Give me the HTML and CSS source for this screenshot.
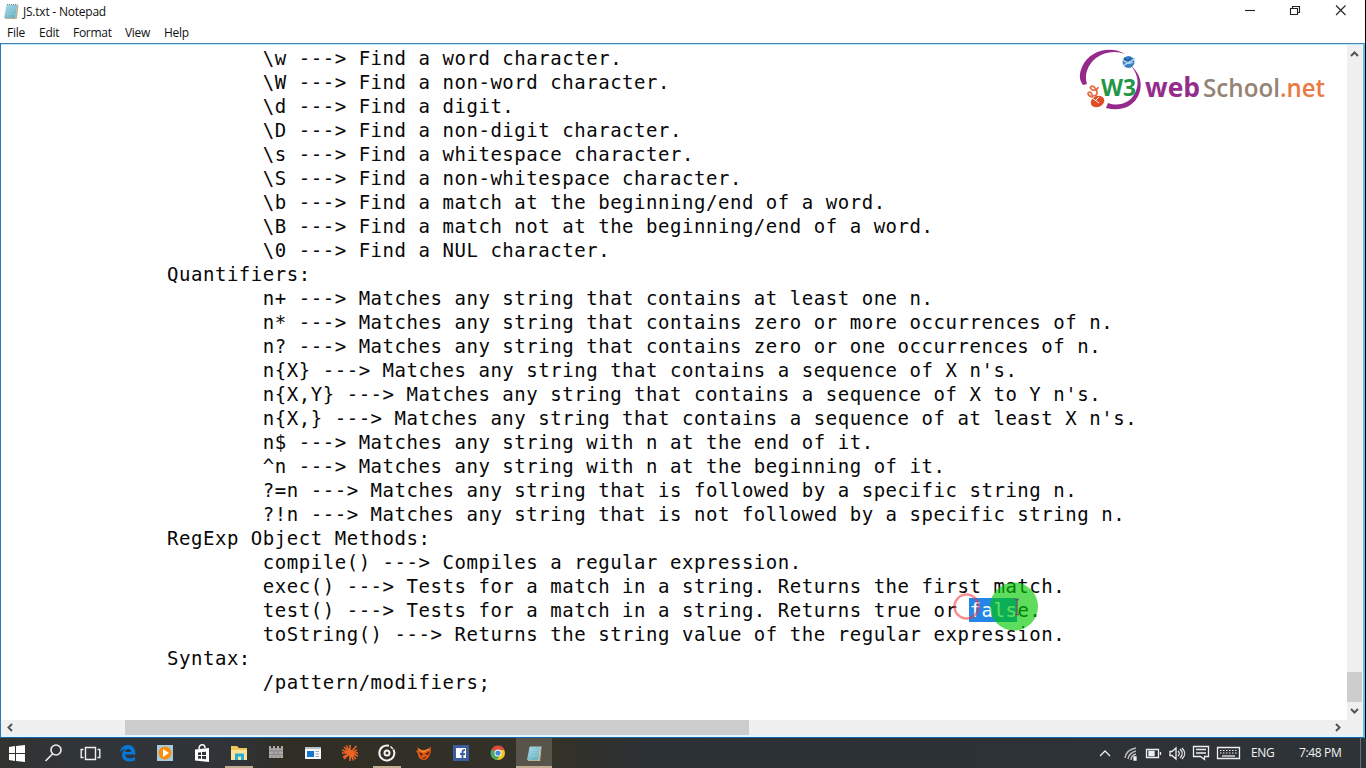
FILE: index.html
```html
<!DOCTYPE html>
<html lang="en">
<head>
<meta charset="utf-8">
<title>JS.txt - Notepad</title>
<link rel="stylesheet" href="styles.css">
</head>
<body>
<svg class="defs" width="0" height="0">
  <defs>
    <linearGradient id="pad" x1="0" y1="0" x2="1" y2="1"><stop offset="0" stop-color="#a9dbe8"/><stop offset="1" stop-color="#5ba9bf"/></linearGradient>
    <symbol id="notepad" viewBox="0 0 16 17">
      <path d="M4 1.5h11.5L14 16H2z" fill="#d8d2ba"/>
      <path d="M3.5 2H14l-1.8 13H1z" fill="url(#pad)"/>
      <path d="M3.2 5h10M2.8 8h10M2.4 11h10" stroke="#a5d5e1" stroke-width=".6"/>
      <path d="M4 1.5h10.5" stroke="#718c91" stroke-width="1" stroke-dasharray="1 1"/>
      <path d="M14.8 3 13.2 15.3H2" fill="none" stroke="#b5ad92" stroke-width="1"/>
    </symbol>
  </defs>
</svg>
<div class="window">
  <header class="titlebar">
    <svg class="app-icon" width="16" height="17"><use href="#notepad"/></svg>
    <span class="title">JS.txt - Notepad</span>
    <svg class="controls" width="120" height="22" viewBox="0 0 120 22" fill="none" stroke="#222" stroke-width="1.1">
      <path d="M0 10.500h10"/>
      <path d="M45.500 8.500h7v6h-7zM47.500 8V6.500h7v6H53"/>
      <path d="m91 5.500 9.500 9.500M100.500 5.500 91 15"/>
    </svg>
  </header>
  <nav class="menu"><span class="m-file">File</span><span class="m-edit">Edit</span><span class="m-format">Format</span><span class="m-view">View</span><span class="m-help">Help</span></nav>
  <div class="editor">
    <div class="content">
<pre class="text">        \w ---&gt; Find a word character.
        \W ---&gt; Find a non-word character.
        \d ---&gt; Find a digit.
        \D ---&gt; Find a non-digit character.
        \s ---&gt; Find a whitespace character.
        \S ---&gt; Find a non-whitespace character.
        \b ---&gt; Find a match at the beginning/end of a word.
        \B ---&gt; Find a match not at the beginning/end of a word.
        \0 ---&gt; Find a NUL character.
Quantifiers:
        n+ ---&gt; Matches any string that contains at least one n.
        n* ---&gt; Matches any string that contains zero or more occurrences of n.
        n? ---&gt; Matches any string that contains zero or one occurrences of n.
        n{X} ---&gt; Matches any string that contains a sequence of X n's.
        n{X,Y} ---&gt; Matches any string that contains a sequence of X to Y n's.
        n{X,} ---&gt; Matches any string that contains a sequence of at least X n's.
        n$ ---&gt; Matches any string with n at the end of it.
        ^n ---&gt; Matches any string with n at the beginning of it.
        ?=n ---&gt; Matches any string that is followed by a specific string n.
        ?!n ---&gt; Matches any string that is not followed by a specific string n.
RegExp Object Methods:
        compile() ---&gt; Compiles a regular expression.
        exec() ---&gt; Tests for a match in a string. Returns the first match.
        test() ---&gt; Tests for a match in a string. Returns true or <span class="selected">fals</span>e.
        toString() ---&gt; Returns the string value of the regular expression.
Syntax:
        /pattern/modifiers;</pre>
    </div>
    <div class="vscroll">
      <svg width="15" height="17" viewBox="0 0 15 17" fill="none" stroke="#555" stroke-width="2"><path d="m4 11 3.500-3.500L11 11"/></svg>
      <div class="vthumb"></div>
      <svg width="15" height="18" viewBox="0 0 15 18" fill="none" stroke="#555" stroke-width="2"><path d="m4 7 3.500 3.500L11 7"/></svg>
    </div>
  </div>
  <div class="hscroll">
    <svg width="16" height="15" viewBox="0 0 16 15" fill="none" stroke="#555" stroke-width="2"><path d="M11 4 7.500 7.500 11 11"/></svg>
    <div class="hthumb"></div>
    <svg class="right-arrow" width="16" height="15" viewBox="0 0 16 15" fill="none" stroke="#555" stroke-width="2"><path d="m6 4 3.500 3.500L6 11"/></svg>
  </div>
</div>

<svg class="logo" width="260" height="66" viewBox="1075 46 260 66">
  <path d="M1125 54C1112 46 1090 49 1082 67c-3 7-3 13 1 18l4-1c-3-8 0-19 9-26 8-6 19-8 29-4z" fill="#962a8a"/>
  <path d="M1131 66c8 9 8 19 4 27-5 10-16 14-27 10l-2 5c14 4 28-1 33-14 4-10 1-21-8-28z" fill="#962a8a"/>
  <circle cx="1128.500" cy="62" r="6" fill="#3c7fbe"/>
  <path d="M1123 60c4 4 9 1 12-2M1124 66c2-5 6-1 9-4" fill="none" stroke="#a9d5ef" stroke-width="1.300"/>
  <path d="m1124 58 4 3 3-3" fill="none" stroke="#165495" stroke-width="1.300"/>
  <ellipse cx="1097.500" cy="101.500" rx="7" ry="5.500" transform="rotate(-25 1097.500 101.500)" fill="#df4c25"/>
  <path d="m1092 98 7 5M1099 97l-4 4" stroke="#fff" stroke-width="1"/>
  <path d="M1093 97c-6-1-6-5-3-5 2 0 1 4 4 4 5-1 3-7 0-9-2-2-5 0-3 2s7 1 7-2" fill="none" stroke="#e46b43" stroke-width="1.700"/>
  <text class="logo-w3" x="1101" y="96" textLength="35" lengthAdjust="spacingAndGlyphs">W3</text>
  <text class="logo-name web" x="1145" y="97" textLength="55" lengthAdjust="spacingAndGlyphs">web</text>
  <text class="logo-name school" x="1203" y="97" textLength="77" lengthAdjust="spacingAndGlyphs">School</text>
  <text class="logo-name net" x="1280" y="97" textLength="45" lengthAdjust="spacingAndGlyphs">.net</text>
</svg>

<svg class="pointer" width="96" height="60" viewBox="950 576 96 60">
  <circle cx="1014" cy="606.500" r="24" fill="#00c800" fill-opacity=".63"/>
  <circle cx="966.500" cy="606.500" r="12" fill="none" stroke="#ed3434" stroke-opacity=".55" stroke-width="2.500"/>
  <path d="M1015 599.500h4M1017 600v14M1015 614.500h4" fill="none" stroke="#715466" stroke-width="1.300"/>
</svg>

<footer class="taskbar">
  <div class="apps">
    <div class="task"><svg width="24" height="24" viewBox="0 0 24 24"><path d="m4 6 6-1v7H4zm7-1 9-1v8h-9zM4 13h6v7l-6-1zm7 0h9v8l-9-1z" fill="#fff"/></svg></div>
    <div class="task"><svg width="24" height="24" viewBox="0 0 24 24" fill="none" stroke="#eee" stroke-width="1.600"><circle cx="14" cy="9" r="5"/><path d="m10.500 13-7 7"/></svg></div>
    <div class="task"><svg width="24" height="24" viewBox="0 0 24 24" fill="none" stroke="#eee" stroke-width="1.400"><path d="M6.500 6.500h10v12h-10zM4.500 8.500H2.200v8h2.300M18.500 8.500h2.300v8h-2.300"/></svg></div>
    <div class="task"><svg width="24" height="24" viewBox="0 0 24 24"><path d="M4 11C5 6 8 4 12 4c5 0 7.500 4 7.500 9.500H9c0 4.500 6 4.500 10 2.500v3.500c-6 2.500-13 .5-13-5.500 0-3 1.500-5 4-6-3 0-4.500 1.500-6 3zM9 11h6c0-4-5-4-6 0z" fill="#0878d7" fill-rule="evenodd"/></svg></div>
    <div class="task"><svg width="24" height="24" viewBox="0 0 24 24"><path d="M4 4h16v16H4z" fill="#a8cadd"/><circle cx="12" cy="12" r="6.500" fill="#fb8c08"/><path d="m10 8 6 4-6 4z" fill="#fff"/></svg></div>
    <div class="task"><svg width="24" height="24" viewBox="0 0 24 24"><path d="M5 8.500 19 7v14l-14-1.500z" fill="#fff"/><path d="M9 8c0-5 6-6 6-1" fill="none" stroke="#fff" stroke-width="1.500"/><path d="m8 11.500 3-.3V14H8zm4-.4 4-.4V14h-4zM8 15h3v2.700l-3-.2zm4 0h4v3.200l-4-.4z" fill="#303438"/></svg></div>
    <div class="task open"><svg width="24" height="24" viewBox="0 0 24 24"><path d="M4 5h6l2 2h8v12H4z" fill="#efc65b"/><path d="M4 9h16v10H4z" fill="#ffe397"/><path d="M8 12.500h9V19h-3v-3.500h-3V19H8z" fill="#28aeda"/></svg></div>
    <div class="task"><svg width="24" height="24" viewBox="0 0 24 24"><path d="M5 5h2v2h2V5h2v2h2V5h2v2h2V5h2v12H5z" fill="#aaa"/><path d="M5 10h14M5 13.500h14M8 7v3m4-3v3m4-3v3m-6 0v4m4-4v4m-6 0v3m4-3v3m4-3v3" stroke="#777" stroke-width=".6"/></svg></div>
    <div class="task"><svg width="24" height="24" viewBox="0 0 24 24"><path d="M4 6h16v12H4z" fill="#f5f7f9"/><path d="M4 6h16v2H4z" fill="#b6c2ca"/><path d="M6 10h7v6H6z" fill="#1675cb"/><path d="M14.500 10.500h3.500m-3.500 2.500h3.500m-3.500 2.500h3.500" stroke="#9ea9b1"/></svg></div>
    <div class="task"><svg width="24" height="24" viewBox="0 0 24 24" stroke="#ee6426" stroke-width="1.600"><path d="M12 4v16M4 12h16M6 6l12 12M18.500 5 6 18M8.500 4.500l7 15M4 9l16 6M5 16l14-7"/><circle cx="12" cy="12" r="2" fill="#ee6426"/></svg></div>
    <div class="task open"><svg width="24" height="24" viewBox="0 0 24 24" fill="none" stroke="#f2f2f2"><path d="M14 4.800A7.500 7.500 0 1 0 18.500 8.500" stroke-width="2"/><path d="M15.500 5.500 18 8" stroke-width="1.500"/><circle cx="12" cy="12" r="2.500" stroke-width="2"/></svg></div>
    <div class="task"><svg width="24" height="24" viewBox="0 0 24 24"><path d="M5 5c1 3 3 3 6 4 3 0 6-1 8-4-1 4 1 5-1 8-1 4-4 6-6 6-4 0-6-3-6-6l-2-3 2-1z" fill="#dc5918"/><path d="m7 11 4 2-2 2zm6 2 5-3-2 4zM8 16l3 1 4-2-3 3z" fill="#5d170d"/><path d="m6 8 5 3 6-3" fill="none" stroke="#f6a43b"/></svg></div>
    <div class="task"><svg width="24" height="24" viewBox="0 0 24 24"><path d="M4 4h16v16H4z" fill="#3b5c9e"/><path d="M7 7h10v10H7z" fill="#fff"/><path d="M13.500 17v-6c0-1.500 1-2 2.500-2M11 13h5" fill="none" stroke="#3b5c9e" stroke-width="1.800"/></svg></div>
    <div class="task"><svg width="24" height="24" viewBox="0 0 24 24"><circle cx="12" cy="12" r="7" fill="#f4c51f"/><path d="M12 12 5.500 9A7 7 0 0 1 18.500 9H12z" fill="#dc4d3e"/><path d="M5.500 8.500A7 7 0 0 0 11 19l3-5-2-2z" fill="#4aaa62"/><circle cx="12" cy="12" r="3.500" fill="#fff"/><circle cx="12" cy="12" r="2.600" fill="#4d87d5"/></svg></div>
    <div class="task active"><svg width="16" height="17"><use href="#notepad"/></svg></div>
  </div>
  <div class="tray">
    <svg width="162" height="28" viewBox="1080 739 162 28" fill="none" stroke="#eee" stroke-width="1.300">
      <path d="m1100 756 5-5 5 5"/>
      <path d="M1125 758c1-6 5-9 11-10M1128 759c1-5 4-7 8-8M1131 760c0-3 2-5 5-6" stroke="#bbb" stroke-width="1.500"/><path d="M1134 760v-3h2v3z" fill="#fff"/>
      <path d="M1146.500 749.500h12v8h-12zM1160.500 752v3"/><path d="M1149 751.500h5v4h-5z" fill="#eee"/>
      <path d="M1170 751.500h2l4-3.500v11l-4-3.500h-2zM1178 751c2 2 2 3 0 5m2-7c3 3 3 6 0 9m2-10c4 4 4 7 0 11"/>
      <path d="M1193.500 746.500h15v10h-4v3l-4-3h-7zM1196 749.500h10m-10 3.500h10"/>
      <path d="M1217.500 747.500h22v11h-22z"/><path d="M1220 750.500h18m-18 2.500h18" stroke-width="1" stroke-dasharray="1.500 1.500"/><path d="M1222 756h13"/>
    </svg>
    <span class="language">ENG</span><span class="clock">7:48 PM</span><span class="peek"></span>
  </div>
</footer>
</body>
</html>
```
FILE: styles.css
```css
* { box-sizing: border-box; }
body { margin: 0; width: 1366px; height: 768px; overflow: hidden; position: relative; background: #000; font: 12px "Open Sans", sans-serif; color: #111; }
svg { display: block; flex: none; }
.defs { position: absolute; }
.window { width: 1365px; height: 738px; background: #fff; display: flex; flex-direction: column; }
.titlebar { height: 22px; display: flex; align-items: center; padding-left: 3px; }
.title { margin-left: 4px; letter-spacing: -.22px; line-height: 22px; position: relative; top: 1px; }
.controls { margin-left: auto; }
.menu { height: 21px; display: flex; padding-left: 7px; line-height: 21px; letter-spacing: -.28px; }
.m-file { width: 32px; }
.m-edit { width: 34px; }
.m-format { width: 52px; }
.m-view { width: 39px; }
.editor { height: 677px; display: flex; border-top: 1px solid #4086bd; border-left: 1px solid #2878b5; border-right: 2px solid #60bdea; box-shadow: inset 0 1px #c2e6fb; }
.content { flex: 1; padding: 2px 0 0 166px; overflow: hidden; }
.text { margin: 0; font: 19px/24px "DejaVu Sans Mono", monospace; letter-spacing: .538px; color: #080808; }
.selected { display: inline-block; height: 24px; vertical-align: top; color: #fff; background: #2586e8; }
.vscroll { width: 15px; margin: 1px 1px 0 0; background: #f0f0f0; display: flex; flex-direction: column; }
.vthumb { height: 30px; margin-top: auto; background: #cdcdcd; }
.hscroll { height: 18px; display: flex; background: #f0f0f0; border-left: 1px solid #2878b5; border-right: 2px solid #60bdea; border-bottom: 1px solid #1b67a5; box-shadow: inset 0 -2px #dff5ff; }
.hthumb { width: 624px; height: 15px; margin-left: 108px; background: #cdcdcd; }
.right-arrow { margin-left: auto; margin-right: 17px; }
.logo { position: absolute; left: 1075px; top: 46px; }
.logo text { font-family: "Open Sans", sans-serif; font-weight: 600; }
.logo .logo-w3 { font-size: 23px; font-weight: 700; fill: #249747; }
.logo .logo-name { font-size: 26px; }
.logo .web { fill: #942c8b; font-weight: 700; }
.school { fill: #958376; }
.net { fill: #e97a43; }
.pointer { position: absolute; left: 950px; top: 576px; }
.taskbar { height: 30px; display: flex; background: linear-gradient(90deg, #333330 0, #303539 5%, #303438 17%, #302e24 21%, #343228 40%, #2c3135 48%, #2e3338 100%); color: #f4f4f4; }
.apps { display: flex; margin-left: -2px; }
.task { width: 37px; display: grid; place-items: center; background: linear-gradient(#c1ad92, #c1ad92) center bottom / 0 2px no-repeat; }
.task.open { background-size: 28px 2px; }
.task.active { width: 36px; background-color: #59544a; background-size: 36px 2px; }
.tray { margin-left: auto; display: flex; align-items: center; line-height: 26px; padding-bottom: 1px; }
.language { width: 48px; padding-left: 9px; letter-spacing: -.3px; }
.clock { width: 70px; padding-left: 9px; letter-spacing: -.35px; }
.peek { width: 6px; height: 30px; border-left: 1px solid #6b6e70; }
```
